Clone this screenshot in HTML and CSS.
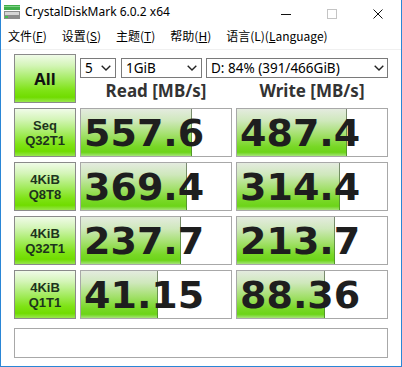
FILE: index.html
```html
<!DOCTYPE html>
<html>
<head>
<meta charset="utf-8">
<link rel="stylesheet" href="styles.css">
</head>
<body>
<div class="window">
  <div class="titlebar">
    <svg class="appicon" width="16" height="14" viewBox="0 0 16 14">
      <rect x="0" y="0" width="16" height="5" fill="#3fae48"/>
      <rect x="0" y="1" width="16" height="1" fill="#7ed287"/>
      <rect x="0" y="6" width="16" height="8" fill="#8c8c8c"/>
      <rect x="1" y="7" width="14" height="3" fill="#d6d6d6"/>
      <rect x="1" y="11" width="3" height="2" fill="#45c04e"/>
    </svg>
    <span class="title">CrystalDiskMark 6.0.2 x64</span>
    <div class="caption">
      <span class="cbtn"><svg width="10" height="10" viewBox="0 0 10 10"><line x1="0" y1="5.5" x2="10" y2="5.5" stroke="#111" stroke-width="1"/></svg></span>
      <span class="cbtn"><svg width="10" height="10" viewBox="0 0 10 10"><rect x="0.5" y="0.5" width="9" height="9" fill="none" stroke="#c4c4c4" stroke-width="1"/></svg></span>
      <span class="cbtn"><svg width="10" height="10" viewBox="0 0 10 10"><path d="M0.5 0.5 L9.5 9.5 M9.5 0.5 L0.5 9.5" stroke="#111" stroke-width="1"/></svg></span>
    </div>
  </div>
  <div class="menubar">
    <span class="mi">文件(<u>F</u>)</span>
    <span class="mi">设置(<u>S</u>)</span>
    <span class="mi">主题(<u>T</u>)</span>
    <span class="mi">帮助(<u>H</u>)</span>
    <span class="mi">语言(L)(<u>L</u>anguage)</span>
  </div>
  <div class="content">
    <div class="grid">
      <div class="btn all">All</div>
      <div class="top-right">
        <div class="selects">
          <div class="sel s1"><span>5</span><svg class="chev" width="10" height="6" viewBox="0 0 10 6"><path d="M0.7 0.7 L5 5 L9.3 0.7" fill="none" stroke="#222" stroke-width="1.4"/></svg></div>
          <div class="sel s2"><span>1GiB</span><svg class="chev" width="10" height="6" viewBox="0 0 10 6"><path d="M0.7 0.7 L5 5 L9.3 0.7" fill="none" stroke="#222" stroke-width="1.4"/></svg></div>
          <div class="sel s3"><span>D: 84% (391/466GiB)</span><svg class="chev" width="10" height="6" viewBox="0 0 10 6"><path d="M0.7 0.7 L5 5 L9.3 0.7" fill="none" stroke="#222" stroke-width="1.4"/></svg></div>
        </div>
        <div class="headers">
          <div class="hd">Read [MB/s]</div>
          <div class="hd">Write [MB/s]</div>
        </div>
      </div>

      <div class="btn label"><div class="ln">Seq</div><div class="ln">Q32T1</div></div>
      <div class="val" style="--w:111px"><span>557.6</span></div>
      <div class="val" style="--w:110px"><span>487.4</span></div>

      <div class="btn label"><div class="ln">4KiB</div><div class="ln">Q8T8</div></div>
      <div class="val" style="--w:106px"><span>369.4</span></div>
      <div class="val" style="--w:103px"><span>314.4</span></div>

      <div class="btn label"><div class="ln">4KiB</div><div class="ln">Q32T1</div></div>
      <div class="val" style="--w:100px"><span>237.7</span></div>
      <div class="val" style="--w:98px"><span>213.7</span></div>

      <div class="btn label"><div class="ln">4KiB</div><div class="ln">Q1T1</div></div>
      <div class="val" style="--w:77px"><span>41.15</span></div>
      <div class="val" style="--w:88px"><span>88.36</span></div>
    </div>
    <div class="status"></div>
  </div>
</div>
</body>
</html>
```

FILE: styles.css
```css
html, body {
  margin: 0;
  padding: 0;
}
body {
  width: 402px;
  height: 367px;
  overflow: hidden;
  background: #ffffff;
  font-family: "Noto Sans", "Noto Sans CJK SC", sans-serif;
}
.window {
  box-sizing: border-box;
  width: 402px;
  height: 367px;
  border: 1px solid #2a86d6;
  border-top: none;
  display: flex;
  flex-direction: column;
  background: #ffffff;
}
.titlebar {
  height: 30px;
  display: flex;
  align-items: flex-start;
  flex-shrink: 0;
}
.appicon {
  margin-left: 3px;
  margin-top: 5px;
  display: block;
}
.title {
  margin-left: 5px;
  margin-top: 4px;
  font-size: 12px;
  line-height: 16px;
  color: #000;
}
.caption {
  margin-left: auto;
  display: flex;
}
.cbtn {
  width: 46px;
  height: 30px;
  box-sizing: border-box;
  padding-top: 9px;
  display: flex;
  justify-content: center;
  align-items: flex-start;
}
.cbtn svg { display: block; }
.menubar {
  height: 19px;
  flex-shrink: 0;
  border-bottom: 1px solid #f0f0f0;
  display: flex;
  gap: 15px;
  padding-left: 7px;
  font-family: "Noto Sans CJK SC", sans-serif;
  font-size: 12px;
  line-height: 12px;
  color: #000;
}
.mi u {
  text-decoration: underline;
  text-underline-offset: 1px;
}
.content {
  padding: 4px 0 0 13px;
}
.grid {
  display: grid;
  grid-template-columns: 62px 152px 152px;
  grid-auto-rows: 49px;
  column-gap: 4px;
  row-gap: 5px;
}
.btn {
  box-sizing: border-box;
  border: 1px solid #8a8a8a;
  background: linear-gradient(to bottom, #f0fbe8 0%, #d4f5b8 22%, #a6ec64 50%, #7fe316 75%, #70dc00 90%, #98e64e 100%);
  display: flex;
  flex-direction: column;
  align-items: center;
  justify-content: center;
  text-align: center;
  font-weight: bold;
}
.all {
  font-size: 16.5px;
  color: #111;
}
.label {
  font-family: "Liberation Sans", Arial, sans-serif;
  font-size: 13px;
  color: #1d331d;
}
.ln {
  height: 15px;
  line-height: 15px;
}
.top-right {
  grid-column: 2 / span 2;
  display: flex;
  flex-direction: column;
}
.selects {
  margin-top: 4px;
  height: 20px;
  display: flex;
}
.sel {
  box-sizing: border-box;
  height: 20px;
  border: 1px solid #7a7a7a;
  background: #fff;
  display: flex;
  align-items: center;
  justify-content: space-between;
  padding: 0 4px 0 4px;
  font-size: 13.5px;
  color: #000;
}
.s1 { width: 36px; margin-right: 5px; }
.s2 { width: 81px; margin-right: 4px; }
.s3 { width: 182px; padding-right: 3px; }
.chev { display: block; }
.headers {
  display: flex;
  gap: 4px;
  height: 25px;
}
.hd {
  width: 152px;
  text-align: center;
  font-weight: bold;
  font-size: 17px;
  line-height: 25px;
  color: #333;
}
.val {
  box-sizing: border-box;
  border: 1px solid #a8a8a8;
  background:
    linear-gradient(to bottom, #7c8a74, #4f9a22) no-repeat calc(var(--w) - 1px) 0 / 1px 100%,
    linear-gradient(to bottom, #e4ebdf 0%, #cfe8bc 25%, #a2e06a 55%, #78d826 80%, #6cd418 92%, #a6e47a 100%) no-repeat 0 0 / var(--w) 100%,
    #ffffff;
  display: flex;
  align-items: center;
  padding-left: 3px;
  font-family: "DejaVu Sans", sans-serif;
  font-weight: bold;
  font-size: 38px;
  line-height: 1;
  color: #1e1e1e;
}
.status {
  margin-top: 9px;
  box-sizing: border-box;
  width: 374px;
  height: 30px;
  border: 1px solid #a8a8a8;
  background: #fff;
}
```
